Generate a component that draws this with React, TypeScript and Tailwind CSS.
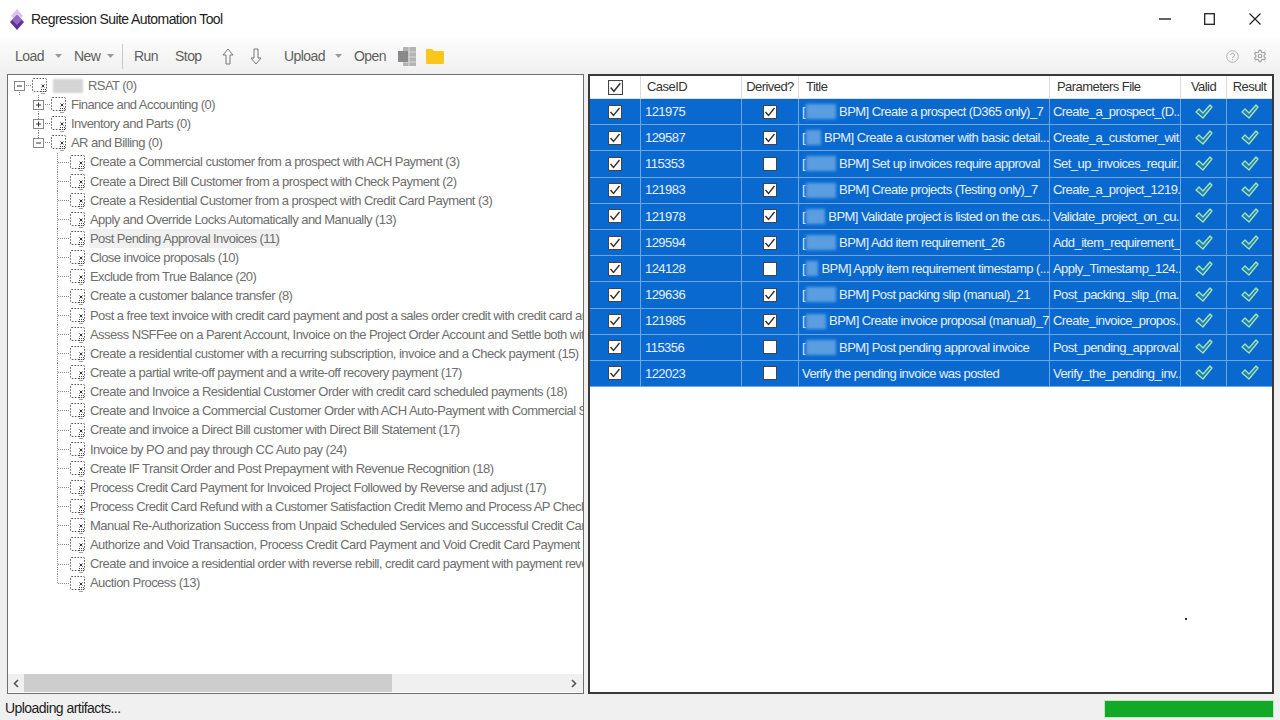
import React from "react";

const FONT = "font-['Liberation_Sans',Arial,sans-serif]";

const leaves = [
  "Create a Commercial customer from a prospect with ACH Payment (3)",
  "Create a Direct Bill Customer from a prospect with Check Payment (2)",
  "Create a Residential Customer from a prospect with Credit Card Payment (3)",
  "Apply and Override Locks Automatically and Manually (13)",
  "Post Pending Approval Invoices (11)",
  "Close invoice proposals (10)",
  "Exclude from True Balance (20)",
  "Create a customer balance transfer (8)",
  "Post a free text invoice with credit card payment and post a sales order credit with credit card auto-refund (12)",
  "Assess NSFFee on a Parent Account, Invoice on the Project Order Account and Settle both with a West (12)",
  "Create a residential customer with a recurring subscription, invoice and a Check payment (15)",
  "Create a partial write-off payment and a write-off recovery payment (17)",
  "Create and Invoice a Residential Customer Order with credit card scheduled payments (18)",
  "Create and Invoice a Commercial Customer Order with ACH Auto-Payment with Commercial Statement Format (16)",
  "Create and invoice a Direct Bill customer with Direct Bill Statement (17)",
  "Invoice by PO and pay through CC Auto pay (24)",
  "Create IF Transit Order and Post Prepayment with Revenue Recognition (18)",
  "Process Credit Card Payment for Invoiced Project Followed by Reverse and adjust (17)",
  "Process Credit Card Refund with a Customer Satisfaction Credit Memo and Process AP Check to Customer (12)",
  "Manual Re-Authorization Success from Unpaid Scheduled Services and Successful Credit Card Auto-pay (14)",
  "Authorize and Void Transaction, Process Credit Card Payment and Void Credit Card Payment (14)",
  "Create and invoice a residential order with reverse rebill, credit card payment with payment reversal (Card) (13)",
  "Auction Process (13)",
];

const cases: [string, boolean, string | null, string][] = [
  ["121975", true, "BPM] Create a prospect (D365 only)_7", "Create_a_prospect_(D..."],
  ["129587", true, "BPM] Create a customer with basic detail...", "Create_a_customer_wit..."],
  ["115353", false, "BPM] Set up invoices require approval", "Set_up_invoices_requir..."],
  ["121983", true, "BPM] Create projects (Testing only)_7", "Create_a_project_1219..."],
  ["121978", true, "BPM] Validate project is listed on the cus...", "Validate_project_on_cu..."],
  ["129594", true, "BPM] Add item requirement_26", "Add_item_requirement_..."],
  ["124128", false, "BPM] Apply item requirement timestamp (...", "Apply_Timestamp_124..."],
  ["129636", true, "BPM] Post packing slip (manual)_21", "Post_packing_slip_(ma..."],
  ["121985", true, "BPM] Create invoice proposal (manual)_7", "Create_invoice_propos..."],
  ["115356", false, "BPM] Post pending approval invoice", "Post_pending_approval..."],
  ["122023", false, null, "Verify_the_pending_inv..."],
];

function NodeIcon() {
  return (
    <svg width="18" height="19" viewBox="0 0 18 19" className="shrink-0">
      <rect x="1.5" y="2.5" width="14" height="13" rx="1" fill="none" stroke="#555" strokeWidth="1" strokeDasharray="1.5 1.5" />
      <path d="M10.5 8.5l3 3m0-3l-3 3" stroke="#333" strokeWidth="1" />
      <path d="M10 13.5h5M10 15.5h5M10.5 17.5h4" stroke="#444" strokeWidth="1.2" strokeDasharray="1 1" />
    </svg>
  );
}

function Expander({ open, cx, up, down }: { open: boolean; cx: number; up?: boolean; down?: boolean }) {
  return (
    <svg width={cx + 12} height="19" viewBox={`0 0 ${cx + 12} 19`} className="shrink-0">
      {up && <path d={`M${cx + 0.5} 0V5`} stroke="#888" strokeDasharray="1 1" />}
      {down && <path d={`M${cx + 0.5} 14V19`} stroke="#888" strokeDasharray="1 1" />}
      <path d={`M${cx + 5} 9.5H${cx + 12}`} stroke="#888" strokeDasharray="1 1" />
      <rect x={cx - 4.5} y="5.5" width="10" height="9" fill="#fff" stroke="#888" />
      <path d={`M${cx - 2} 10H${cx + 3}`} stroke="#333" />
      {!open && <path d={`M${cx + 0.5} 7.5V12.5`} stroke="#333" />}
    </svg>
  );
}

function LeafPrefix({ last }: { last: boolean }) {
  return (
    <svg width="61" height="19" viewBox="0 0 61 19" className="shrink-0">
      <path d={`M49.5 0V${last ? 10 : 19}`} stroke="#888" strokeDasharray="1 1" />
      <path d="M50 9.5H61" stroke="#888" strokeDasharray="1 1" />
    </svg>
  );
}

function Check({ size = 14 }: { size?: number }) {
  return (
    <svg width={size} height={size} viewBox="0 0 14 14">
      <rect x="0.5" y="0.5" width="13" height="13" fill="#fff" stroke="#444" />
      <path d="M2.5 7l3 3.5 6-7.5" fill="none" stroke="#333" strokeWidth="1.4" />
    </svg>
  );
}

function Empty() {
  return (
    <svg width="14" height="14" viewBox="0 0 14 14">
      <rect x="0.5" y="0.5" width="13" height="13" fill="#fff" stroke="#444" />
    </svg>
  );
}

function GreenTick() {
  return (
    <svg width="18" height="16" viewBox="0 0 18 16">
      <path d="M1 8l3-3 4 4 7-8 2 2-9 11z" fill="#1d7fc0" stroke="#a8e6a8" strokeWidth="1.3" strokeLinejoin="round" />
    </svg>
  );
}

function Drop({ w }: { w: string }) {
  return (
    <span className={`${w} flex justify-center`}>
      <svg width="7" height="4" viewBox="0 0 7 4"><path d="M0 0h7L3.5 4z" fill="#999" /></svg>
    </span>
  );
}

function Sep() {
  return <span className="w-px h-[25px] bg-[#c8c8c8]" />;
}

function Arrow({ up }: { up?: boolean }) {
  return (
    <svg width="12" height="17" viewBox="0 0 12 17" className={up ? "" : "rotate-180"}>
      <path d="M6 1L1 7h3v9h4V7h3z" fill="none" stroke="#777" strokeWidth="1" />
    </svg>
  );
}

const cols = "grid grid-cols-[51px_101px_57px_251px_131px_46px_45px]";

export default function App() {
  return (
    <div className={`${FONT} w-[1280px] h-[720px] bg-[#f0f0f0] overflow-hidden flex flex-col relative text-[13px] tracking-[-0.55px]`}>
      {/* Title bar */}
      <div className="h-[38px] bg-white flex items-center pl-[10px] shrink-0">
        <svg width="14" height="21" viewBox="0 0 14 21" className="shrink-0">
          <path d="M7 0l6 7-6 6-6-6z" fill="#d9c3ec" />
          <path d="M7 6l7 7-7 8-7-8z" fill="#5f2f96" />
          <path d="M7 6l5 5-5 5-5-5z" fill="#9268c4" />
        </svg>
        <span className="ml-[7px] text-[14px] tracking-[-0.57px] text-[#222]">Regression Suite Automation Tool</span>
        <div className="ml-auto flex items-center h-full">
          <svg width="12" height="2" viewBox="0 0 12 2" className="mr-[33px]"><path d="M0 1h12" stroke="#222" strokeWidth="1.4" /></svg>
          <svg width="11" height="12" viewBox="0 0 11 12" className="mr-[34px]"><rect x="0.7" y="0.7" width="9.6" height="10.6" fill="none" stroke="#222" strokeWidth="1.3" /></svg>
          <svg width="12" height="12" viewBox="0 0 12 12" className="mr-[19px]"><path d="M.5.5l11 11m0-11l-11 11" stroke="#222" strokeWidth="1.2" /></svg>
        </div>
      </div>

      {/* Toolbar */}
      <div className="h-[35px] shrink-0 flex items-center pl-[15px] pt-[1px] bg-gradient-to-b from-[#fdfdfd] to-[#f0f0f0] text-[14px] text-[#5f5f5f]">
        <span className="w-[27px]">Load</span>
        <Drop w="w-[32px]" />
        <span className="w-[24px]">New</span>
        <Drop w="w-[24px]" />
        <Sep />
        <span className="ml-[11px] w-[22px]">Run</span>
        <span className="ml-[19px] w-[24px]">Stop</span>
        <span className="ml-[14px]"><Sep /></span>
        <span className="ml-[9px]"><Arrow up /></span>
        <span className="ml-[16px]"><Arrow /></span>
        <span className="ml-[11px]"><Sep /></span>
        <span className="ml-[11px] w-[39px]">Upload</span>
        <Drop w="w-[31px]" />
        <span className="w-[30px]">Open</span>
        <svg width="18" height="19" viewBox="0 0 18 19" className="ml-[14px]">
          <rect x="5" y="0" width="13" height="19" fill="#b4b4b4" />
          <path d="M11 0v19M5 5h13M5 10h13M5 15h13" stroke="#d8d8d8" />
          <rect x="0" y="4" width="10" height="11" fill="#8a8a8a" />
        </svg>
        <svg width="18" height="16" viewBox="0 0 18 16" className="ml-[10px]">
          <path d="M0 2a1 1 0 011-1h5l2 2h9a1 1 0 011 1v11a1 1 0 01-1 1H1a1 1 0 01-1-1z" fill="#f8c71c" />
        </svg>
        <div className="ml-auto flex items-center gap-[14px] pr-[13px]">
          <svg width="13" height="13" viewBox="0 0 13 13">
            <circle cx="6.5" cy="6.5" r="5.8" fill="none" stroke="#b0b0b0" />
            <path d="M4.8 5a1.8 1.8 0 113 1.4c-.7.5-1.3.8-1.3 1.6M6.5 9.2v1" fill="none" stroke="#a0a0a0" />
          </svg>
          <svg width="14" height="14" viewBox="0 0 24 24" fill="none" stroke="#a0a0a0" strokeWidth="2">
            <path d="M12.22 2h-.44a2 2 0 0 0-2 2v.18a2 2 0 0 1-1 1.73l-.43.25a2 2 0 0 1-2 0l-.15-.08a2 2 0 0 0-2.73.73l-.22.38a2 2 0 0 0 .73 2.73l.15.1a2 2 0 0 1 1 1.72v.51a2 2 0 0 1-1 1.74l-.15.09a2 2 0 0 0-.73 2.73l.22.38a2 2 0 0 0 2.73.73l.15-.08a2 2 0 0 1 2 0l.43.25a2 2 0 0 1 1 1.73V20a2 2 0 0 0 2 2h.44a2 2 0 0 0 2-2v-.18a2 2 0 0 1 1-1.73l.43-.25a2 2 0 0 1 2 0l.15.08a2 2 0 0 0 2.73-.73l.22-.39a2 2 0 0 0-.73-2.73l-.15-.08a2 2 0 0 1-1-1.74v-.5a2 2 0 0 1 1-1.74l.15-.09a2 2 0 0 0 .73-2.73l-.22-.38a2 2 0 0 0-2.73-.73l-.15.08a2 2 0 0 1-2 0l-.43-.25a2 2 0 0 1-1-1.73V4a2 2 0 0 0-2-2z" />
            <circle cx="12" cy="12" r="3" />
          </svg>
        </div>
      </div>

      {/* Panes */}
      <div className="flex-1 min-h-0 flex pl-[7px] pr-[6px] pt-[1px] gap-[4px]">
        {/* Tree */}
        <div className="w-[577px] h-[620px] border border-[#6e6e6e] bg-white flex flex-col text-[#6e6e6e]">
          <div className="flex-1 min-h-0 overflow-hidden pt-[1px] whitespace-nowrap">
            <div className="flex items-center h-[19.15px]">
              <Expander open cx={11} down />
              <NodeIcon />
              <span className="ml-[4px] w-[30px] h-[14px] bg-[#d4d4d4] blur-[1px]" />
              <span className="ml-[5px]">RSAT (0)</span>
            </div>
            {["Finance and Accounting (0)", "Inventory and Parts (0)", "AR and Billing (0)"].map((t, i) => (
              <div key={t} className="flex items-center h-[19.15px]">
                <span className="w-[19px] shrink-0" />
                <Expander open={i === 2} cx={11} up down={i < 2} />
                <NodeIcon />
                <span className="ml-[3px]">{t}</span>
              </div>
            ))}
            {leaves.map((t, i) => (
              <div key={t} className="flex items-center h-[19.15px]">
                <LeafPrefix last={i === leaves.length - 1} />
                <NodeIcon />
                <span className={`ml-[2px] px-[1px] ${i === 4 ? "bg-[#f0f0f0]" : ""}`}>{t}</span>
              </div>
            ))}
          </div>
          <div className="h-[18px] mb-[1px] shrink-0 flex items-center bg-[#f0f0f0]">
            <span className="w-[16px] flex justify-center">
              <svg width="6" height="9" viewBox="0 0 6 9"><path d="M5 1L1.5 4.500 5 8" fill="none" stroke="#555" strokeWidth="1.6" /></svg>
            </span>
            <span className="w-[368px] h-full bg-[#cdcdcd]" />
            <span className="ml-auto w-[16px] flex justify-center mr-[1px]">
              <svg width="6" height="9" viewBox="0 0 6 9"><path d="M1 1l3.500 3.500L1 8" fill="none" stroke="#555" strokeWidth="1.6" /></svg>
            </span>
          </div>
        </div>

        {/* Grid */}
        <div className="w-[686px] h-[620px] border-2 border-[#3a3a3a] bg-white overflow-hidden">
          <div className={`${cols} h-[23px] text-[#333] border-b border-[#dcdcdc]`}>
            <div className="flex items-center justify-center border-r border-[#dcdcdc]"><Check size={15} /></div>
            <div className="flex items-center pl-[6px] border-r border-[#dcdcdc]">CaseID</div>
            <div className="flex items-center justify-center border-r border-[#dcdcdc]">Derived?</div>
            <div className="flex items-center pl-[7px] border-r border-[#dcdcdc]">Title</div>
            <div className="flex items-center pl-[7px] border-r border-[#dcdcdc]">Parameters File</div>
            <div className="flex items-center justify-center border-r border-[#dcdcdc]">Valid</div>
            <div className="flex items-center justify-center">Result</div>
          </div>
          {cases.map(([id, derived, title, file]) => (
            <div key={id} className={`${cols} h-[26.2px] bg-[#0a69cf] text-[#e6f0fa] border-b border-[#6ea6e2]`}>
              <div className="flex items-center justify-center border-r border-[#6ea6e2]"><Check /></div>
              <div className="flex items-center pl-[4px] border-r border-[#6ea6e2]">{id}</div>
              <div className="flex items-center justify-center border-r border-[#6ea6e2]">{derived ? <Check /> : <Empty />}</div>
              <div className="flex items-center pl-[3px] border-r border-[#6ea6e2] whitespace-nowrap overflow-hidden">
                {title ? (
                  <>
                    <span>[</span>
                    <span className="ml-[1px] w-[30px] h-[15px] bg-[#5a9ee0] blur-[1.5px]" />
                    <span className="ml-[3px]">{title}</span>
                  </>
                ) : (
                  <span>Verify the pending invoice was posted</span>
                )}
              </div>
              <div className="flex items-center pl-[3px] border-r border-[#6ea6e2] whitespace-nowrap overflow-hidden">{file}</div>
              <div className="flex items-center justify-center border-r border-[#6ea6e2]"><GreenTick /></div>
              <div className="flex items-center justify-center"><GreenTick /></div>
            </div>
          ))}
        </div>
      </div>

      {/* Status bar */}
      <div className="h-[26px] shrink-0 flex items-center pl-[5px] pr-[6px] text-[14px] text-[#222]">
        <span className="pt-[2px]">Uploading artifacts...</span>
        <div className="ml-auto mt-[3px] w-[170px] h-[18px] bg-[#13a826] border border-[#bfe8c2]" />
      </div>

      <span className="absolute left-[1185px] top-[618px] w-[2px] h-[2px] bg-[#333]" />
    </div>
  );
}
